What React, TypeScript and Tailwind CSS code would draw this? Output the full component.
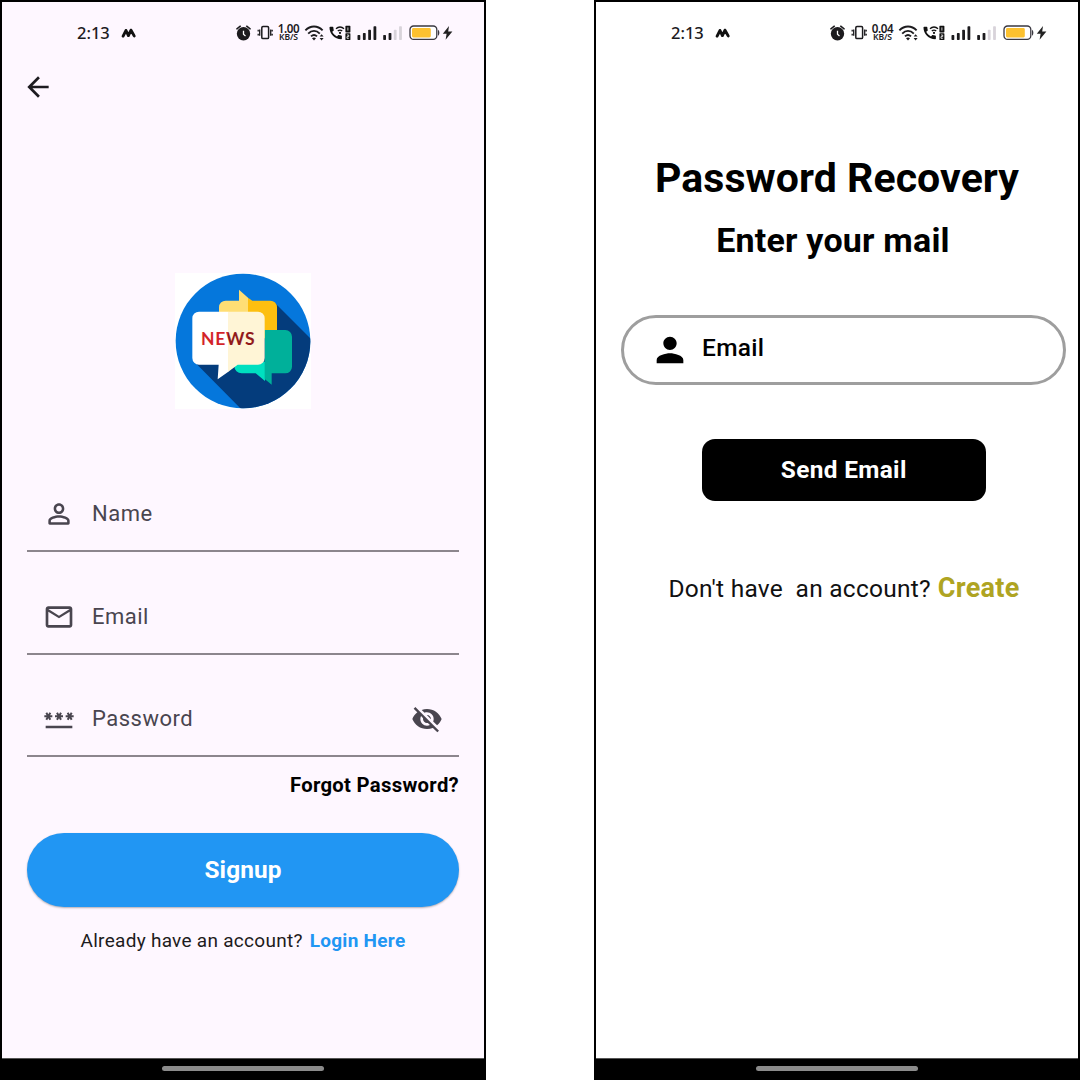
import React from "react";

type IconProps = { d: string; className: string };

function Icon({ d, className }: IconProps) {
  return (
    <svg viewBox="0 0 24 24" fill="currentColor" className={className}>
      <path d={d} />
    </svg>
  );
}

const PATHS = {
  back: "M20 11H7.83l5.59-5.59L12 4l-8 8 8 8 1.41-1.41L7.83 13H20v-2z",
  personOutline:
    "M12 5.9c1.16 0 2.1.94 2.1 2.1s-.94 2.1-2.1 2.1S9.9 9.16 9.9 8s.94-2.1 2.1-2.1m0 9c2.97 0 6.1 1.46 6.1 2.1v1.1H5.9V17c0-.64 3.13-2.1 6.1-2.1M12 4C9.79 4 8 5.79 8 8s1.79 4 4 4 4-1.79 4-4-1.79-4-4-4zm0 9c-2.67 0-8 1.34-8 4v2c0 .55.45 1 1 1h14c.55 0 1-.45 1-1v-2c0-2.66-5.33-4-8-4z",
  person:
    "M12 12c2.21 0 4-1.79 4-4s-1.79-4-4-4-4 1.79-4 4 1.79 4 4 4zm0 2c-2.67 0-8 1.34-8 4v2h16v-2c0-2.66-5.33-4-8-4z",
  mail: "M22 6c0-1.1-.9-2-2-2H4c-1.1 0-2 .9-2 2v12c0 1.1.9 2 2 2h16c1.1 0 2-.9 2-2V6zm-2 0l-8 5-8-5h16zm0 12H4V8l8 5 8-5v10z",
  password:
    "M2 17h20v2H2v-2zm1.15-4.05L4 11.47l.85 1.48 1.3-.75-.85-1.48H7v-1.5H5.3l.85-1.47L4.85 7 4 8.47 3.15 7l-1.3.75.85 1.47H1v1.5h1.7l-.85 1.48 1.3.75zm6.7-.75l1.3.75.85-1.48.85 1.48 1.3-.75-.85-1.48H15v-1.5h-1.7l.85-1.47-1.3-.75L12 8.47 11.15 7l-1.3.75.85 1.47H9v1.5h1.7l-.85 1.48zM23 9.22h-1.7l.85-1.47-1.3-.75L20 8.47 19.15 7l-1.3.75.85 1.47H17v1.5h1.7l-.85 1.48 1.3.75.85-1.48.85 1.48 1.3-.75-.85-1.48H23v-1.5z",
  eyeOff:
    "M12 7c2.76 0 5 2.24 5 5 0 .65-.13 1.26-.36 1.83l2.92 2.92c1.51-1.26 2.7-2.89 3.43-4.75-1.73-4.39-6-7.5-11-7.5-1.4 0-2.74.25-3.98.7l2.16 2.16C10.74 7.13 11.35 7 12 7zM2 4.27l2.28 2.28.46.46C3.08 8.3 1.78 10.02 1 12c1.73 4.39 6 7.5 11 7.5 1.55 0 3.03-.3 4.38-.84l.42.42L19.73 22 21 20.73 3.27 3 2 4.27zM7.53 9.8l1.55 1.55c-.05.21-.08.43-.08.65 0 1.66 1.34 3 3 3 .22 0 .44-.03.65-.08l1.55 1.55c-.67.33-1.41.53-2.2.53-2.76 0-5-2.24-5-5 0-.79.2-1.53.53-2.2zm4.31-.78l3.15 3.15.02-.16c0-1.66-1.34-3-3-3l-.17.01z",
  call: "M20.01 15.38c-1.23 0-2.42-.2-3.53-.56-.35-.12-.74-.03-1.01.24l-1.57 1.97c-2.83-1.35-5.48-3.9-6.89-6.83l1.95-1.66c.27-.28.35-.67.24-1.02-.37-1.11-.56-2.3-.56-3.53 0-.54-.45-.99-.99-.99H4.19C3.65 3 3 3.24 3 3.99 3 13.28 10.73 21 20.01 21c.71 0 .99-.63.99-1.18v-3.45c0-.54-.45-.99-.99-.99z",
};

function StatusBar({ rate }: { rate: string }) {
  return (
    <div className="flex h-[61px] items-center pl-[75px] text-[#1c1b1e]">
      <span className="w-[44px] text-[16.5px] leading-5 font-medium [font-family:'Noto_Sans',sans-serif]">2:13</span>
      <svg viewBox="0 0 16 12" className="h-3 w-4">
        <path
          d="M2.1 9.1 5 3.5M5 3.5 7.4 8.6M7.4 8.6 10 3.2M10 3.2 13.2 8.9"
          fill="none"
          stroke="#111"
          strokeWidth="2.9"
          strokeLinecap="round"
          strokeLinejoin="round"
        />
      </svg>
      <div className="ml-[99px] flex items-center">
        <svg viewBox="0 0 15 16" className="h-4 w-[15px]">
          <circle cx="7.5" cy="8.8" r="6.7" fill="#1c1b1e" />
          <path d="M.9 3.9 4.3 1.2M14.1 3.9 10.7 1.2" stroke="#1c1b1e" strokeWidth="1.5" strokeLinecap="round" />
          <path d="M7.5 5.8v3.5l2 1.6" fill="none" stroke="#fff" strokeWidth="1.3" />
        </svg>
        <svg viewBox="0 0 16 16" className="ml-[6px] h-4 w-4" fill="none" stroke="#1c1b1e">
          <rect x="4.8" y="1.6" width="6.8" height="12" rx="1.2" strokeWidth="1.5" />
          <path d="M2.7 4.4v6.4M13.7 4.4v6.4M1.2 4.8v1.7M1.2 8.7v1.7M15.2 4.8v1.7M15.2 8.7v1.7" strokeWidth="1.3" />
        </svg>
        <div className="ml-[3px] flex w-[25px] flex-col items-center font-semibold whitespace-nowrap [font-family:'Noto_Sans',sans-serif]">
          <span className="text-[11.6px] leading-[9px] tracking-[-0.4px]">{rate}</span>
          <span className="text-[8.6px] leading-[8px] tracking-[-0.1px]">KB/S</span>
        </div>
        <svg viewBox="0 0 21 16" className="ml-[3px] h-4 w-[21px]" fill="none" stroke="#1c1b1e">
          <path d="M1.4 5.4C6.4.2 13.6.2 18.6 5.4M4.2 8.6C7.8 5 12.2 5 15.8 8.6M7 11.4c2-1.9 4-1.9 6 0" strokeWidth="1.9" />
          <path d="M8 13.2 10 15.4l2-2.2c-1.3-1-2.7-1-4 0z" fill="#1c1b1e" stroke="none" />
          <path d="M15.6 11.6 17.6 9.2l2 2.4zM15.6 13 17.6 15.4l2-2.4z" fill="#1c1b1e" stroke="none" />
        </svg>
        <svg viewBox="0 0 22 16" className="ml-[4px] h-4 w-[22px]" fill="#111">
          <path transform="translate(-1.6 -.2) scale(.69)" d={PATHS.call} />
          <path d="M7 3.8c2.4-2.4 5.6-2.4 8 0M8.8 6.1c1.4-1.3 3-1.3 4.4 0" fill="none" stroke="#111" strokeWidth="1.3" />
          <circle cx="11" cy="7.9" r="1.1" />
          <rect x="16.4" y=".8" width="5" height="6.6" rx=".6" />
          <rect x="16.4" y="8.2" width="5" height="6.8" rx=".6" />
          <path d="M18.9 2.4v3.2M18 10h1.7v1.6H18v1.7h1.8" fill="none" stroke="#fff" strokeWidth=".8" />
        </svg>
        <svg viewBox="0 0 20 16" className="ml-[6px] h-4 w-5" fill="#1c1b1e">
          <rect x=".5" y="10" width="2.8" height="5" rx=".7" />
          <rect x="5.9" y="8" width="2.8" height="7" rx=".7" />
          <rect x="11.2" y="4.8" width="2.8" height="10.2" rx=".7" />
          <rect x="16.5" y="1.2" width="2.8" height="13.8" rx=".7" />
        </svg>
        <svg viewBox="0 0 20 16" className="ml-[6px] h-4 w-5" fill="#1c1b1e">
          <rect x=".2" y="10" width="2.8" height="5" rx=".7" />
          <rect x="5.6" y="8" width="2.8" height="7" rx=".7" />
          <rect x="10.8" y="4.8" width="2.8" height="10.2" rx=".7" fill="#d8d3da" />
          <rect x="16.1" y="1.2" width="2.8" height="13.8" rx=".7" fill="#d8d3da" />
        </svg>
        <svg viewBox="0 0 31 16" className="ml-[6px] h-4 w-[31px]">
          <rect x="1" y="1" width="26.8" height="13.4" rx="3.6" fill="#fff" stroke="#3a3840" strokeWidth="1.3" />
          <rect x="3" y="3" width="18.8" height="9.4" rx="1.4" fill="#fcc12f" />
          <path d="M29 4.8c1.8.8 1.8 5.2 0 6z" fill="#3a3840" />
        </svg>
        <svg viewBox="0 0 11 16" className="ml-[2px] h-4 w-[11px]" fill="#222">
          <path d="M7 .9.8 8.7h3.8L3.6 14.7 10.4 6.5H6.2z" />
        </svg>
      </div>
    </div>
  );
}

function NewsLogo() {
  return (
    <svg viewBox="30 24 408 408" className="mx-auto h-[136px] w-[136px]">
      <defs>
        <clipPath id="disc">
          <circle cx="234" cy="228" r="202" />
        </clipPath>
        <linearGradient id="newsInk" gradientUnits="userSpaceOnUse" x1="110" y1="0" x2="268" y2="0">
          <stop offset=".5" stopColor="#d3222a" />
          <stop offset=".5" stopColor="#921a1d" />
        </linearGradient>
      </defs>
      <rect x="30" y="24" width="408" height="408" fill="#fff" />
      <circle cx="234" cy="228" r="202" fill="#0577dc" />
      <g clipPath="url(#disc)">
        <path d="M330 114 460 244V450H246L94 296 220 200z" fill="#043c7c" />
      </g>
      <path d="M249 107V98L222 74V107H182a20 20 0 0 0-20 20V200H249z" fill="#ffde74" />
      <path d="M249 98 262 107H316a20 20 0 0 1 20 20V220H249z" fill="#fdbf10" />
      <path d="M208 290H300V348L272 325H230a22 22 0 0 1-22-22z" fill="#00e0c0" />
      <path d="M299 195H361a20 20 0 0 1 20 20V305a20 20 0 0 1-20 20H320V359L299 342z" fill="#00b09a" />
      <path d="M190 140H102a20 20 0 0 0-20 20V279a20 20 0 0 0 20 20H161L158 343 190 320z" fill="#fff" />
      <path d="M189 140H279a20 20 0 0 1 20 20V279a20 20 0 0 1-20 20H218L189 321z" fill="#fff5d6" />
      <text
        x="108"
        y="241"
        textLength="163"
        lengthAdjust="spacingAndGlyphs"
        fontSize="49"
        fontWeight="700"
        letterSpacing="2"
        fill="url(#newsInk)"
        className="[font-family:Lato,sans-serif]"
      >
        NEWS
      </text>
    </svg>
  );
}

type FieldProps = { icon: string; label: string; className: string; trailing?: React.ReactNode };

function Field({ icon, label, className, trailing }: FieldProps) {
  return (
    <div className={`flex items-center border-b-2 border-[#8c868d] px-4 text-[#49454f] ${className}`}>
      <Icon d={icon} className="h-8 w-8" />
      <span className="ml-[17px] flex-1 text-[22px] leading-7 tracking-[0.5px]">{label}</span>
      {trailing}
    </div>
  );
}

function NavBar() {
  return (
    <div className="flex h-[22px] justify-center border-t border-[#555] bg-black pt-[7px]">
      <div className="h-[5px] w-[162px] rounded-full bg-[#8b8b8b]" />
    </div>
  );
}

function SignupScreen() {
  return (
    <section className="flex w-[486px] flex-col border-2 border-b-0 border-black bg-[#fef7ff]">
      <StatusBar rate="1.00" />
      <div className="flex flex-1 flex-col px-[25px]">
        <Icon d={PATHS.back} className="mt-[8px] -ml-[5px] h-8 w-8 text-[#1d1b20]" />
        <div className="mt-[170px]">
          <NewsLogo />
        </div>
        <Field icon={PATHS.personOutline} label="Name" className="mt-[68px] h-[75px]" />
        <Field icon={PATHS.mail} label="Email" className="mt-[28px] h-[75px]" />
        <Field
          icon={PATHS.password}
          label="Password"
          className="mt-[27px] h-[75px]"
          trailing={<Icon d={PATHS.eyeOff} className="h-8 w-8" />}
        />
        <a className="mt-[16px] self-end text-[20.3px] leading-6 font-bold tracking-[0.3px] text-black">
          Forgot Password?
        </a>
        <button className="mt-[36px] h-[74px] rounded-full bg-[#2196f3] text-[24.4px] font-bold tracking-[0.1px] text-white shadow-[0_1px_2px_rgba(0,0,0,0.3)]">
          Signup
        </button>
        <p className="mt-[22px] text-center text-[19px] leading-6 tracking-[0.28px] text-[#1d1b20]">
          Already have an account?
          <a className="ml-[7px] font-bold text-[#2196f3]">Login Here</a>
        </p>
      </div>
      <NavBar />
    </section>
  );
}

function RecoveryScreen() {
  return (
    <section className="flex w-[486px] flex-col border-2 border-b-0 border-black bg-white text-black">
      <StatusBar rate="0.04" />
      <div className="flex flex-1 flex-col">
        <h1 className="mt-[91px] text-center text-[41px] leading-[48px] font-bold tracking-[0.08px]">
          Password Recovery
        </h1>
        <h2 className="mt-[18px] pr-[8px] text-center text-[34px] leading-[40px] font-bold tracking-[0.2px]">
          Enter your mail
        </h2>
        <div className="mt-[55px] mr-[12px] ml-[25px] flex h-[70px] items-center rounded-full border-[3px] border-[#9e9e9e] pl-[25.5px]">
          <Icon d={PATHS.person} className="h-10 w-10" />
          <span className="-mt-[5px] ml-[12.5px] text-[24.5px] leading-7 font-medium tracking-[0.3px]">Email</span>
        </div>
        <button className="mt-[54px] ml-[106px] h-[62px] w-[283.5px] rounded-[13px] bg-black pt-px text-[24.4px] font-bold tracking-[0.35px] text-white">
          Send Email
        </button>
        <p className="mt-[71px] ml-[72.5px] text-[24.5px] leading-8 tracking-[0.24px] whitespace-pre text-[#111]">
          Don't have  an account?
          <a className="ml-[7px] text-[27px] font-bold tracking-[0.3px] text-[#afa422]">Create</a>
        </p>
      </div>
      <NavBar />
    </section>
  );
}

export default function App() {
  return (
    <main className="flex h-[1080px] w-[1080px] justify-between overflow-hidden bg-white [font-family:Roboto,sans-serif]">
      <SignupScreen />
      <RecoveryScreen />
    </main>
  );
}
